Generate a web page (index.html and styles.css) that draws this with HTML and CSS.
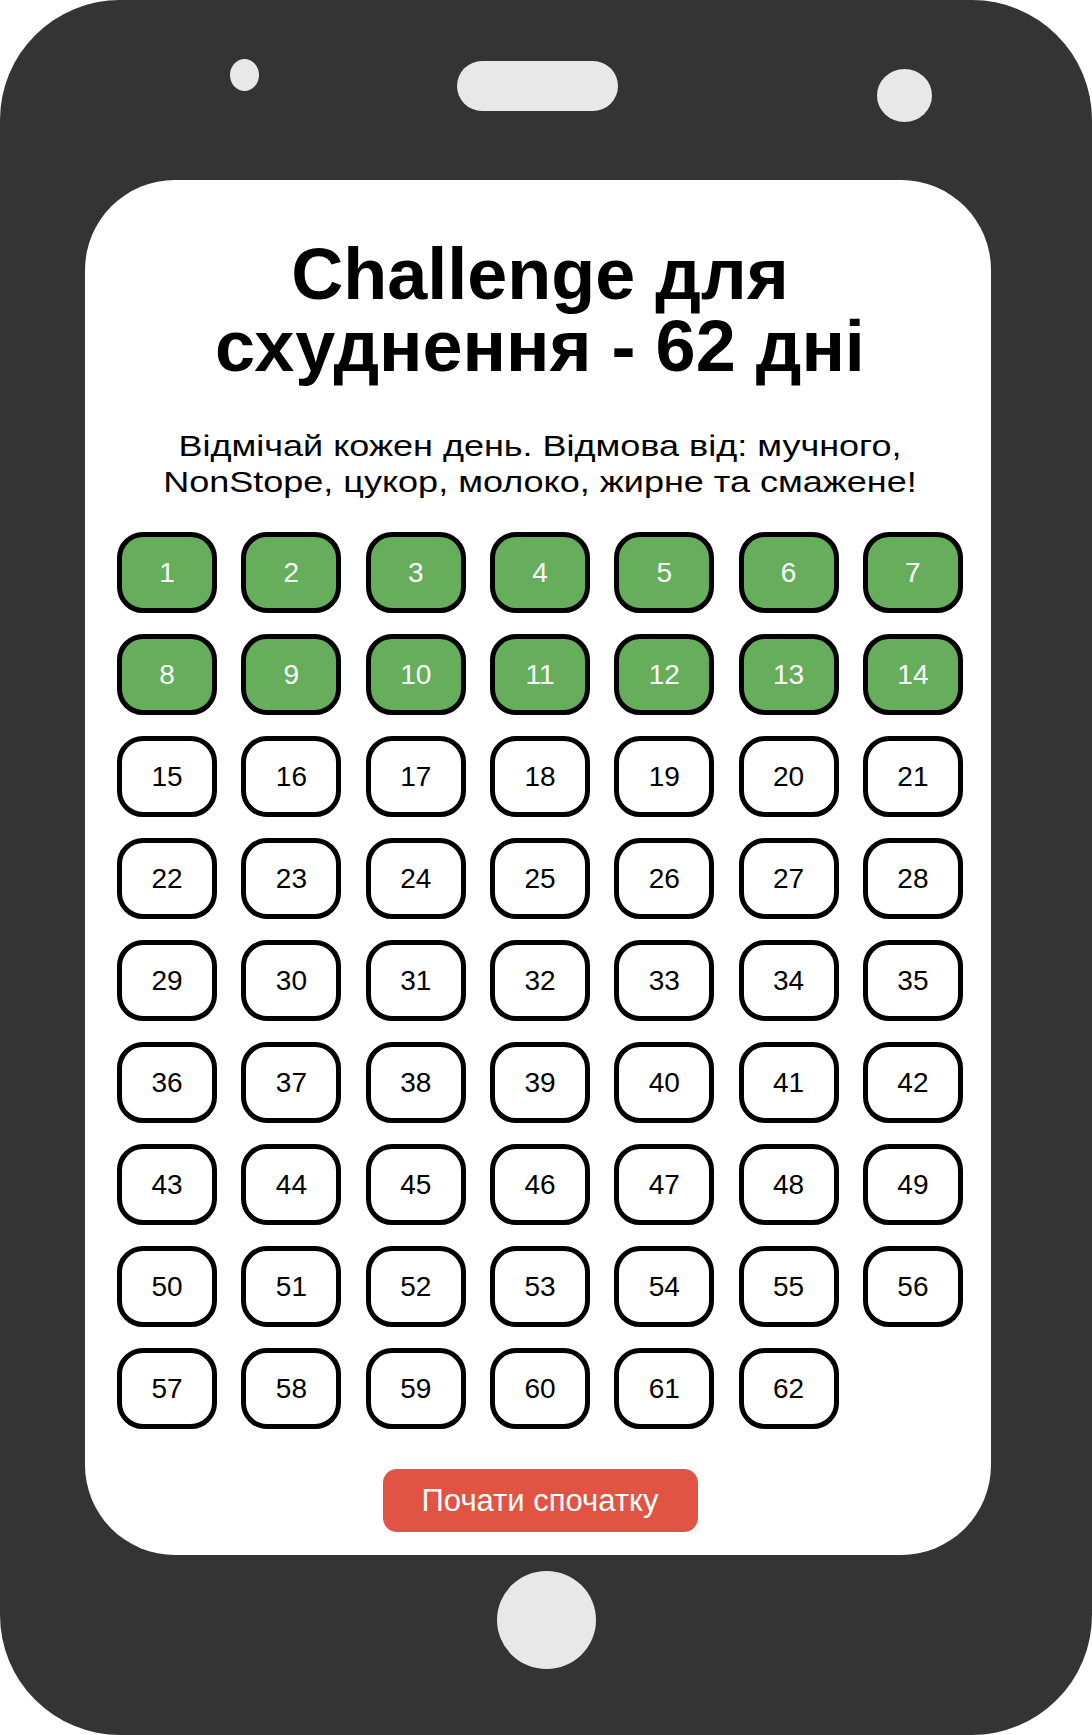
FILE: index.html
```html
<!DOCTYPE html>
<html lang="uk">
<head>
<meta charset="utf-8">
<title>Challenge для схуднення - 62 дні</title>
<link rel="stylesheet" href="styles.css">
</head>
<body>
<div class="phone">
  <div class="top">
    <span class="cam-small"></span>
    <span class="speaker"></span>
    <span class="cam"></span>
  </div>
  <main class="screen">
    <h1 class="title">Challenge для<br>схуднення - 62 дні</h1>
    <p class="lead">Відмічай кожен день. Відмова від: мучного,<br>NonStope, цукор, молоко, жирне та смажене!</p>
    <div class="grid">
      <div class="day done">1</div><div class="day done">2</div><div class="day done">3</div><div class="day done">4</div><div class="day done">5</div><div class="day done">6</div><div class="day done">7</div>
      <div class="day done">8</div><div class="day done">9</div><div class="day done">10</div><div class="day done">11</div><div class="day done">12</div><div class="day done">13</div><div class="day done">14</div>
      <div class="day">15</div><div class="day">16</div><div class="day">17</div><div class="day">18</div><div class="day">19</div><div class="day">20</div><div class="day">21</div>
      <div class="day">22</div><div class="day">23</div><div class="day">24</div><div class="day">25</div><div class="day">26</div><div class="day">27</div><div class="day">28</div>
      <div class="day">29</div><div class="day">30</div><div class="day">31</div><div class="day">32</div><div class="day">33</div><div class="day">34</div><div class="day">35</div>
      <div class="day">36</div><div class="day">37</div><div class="day">38</div><div class="day">39</div><div class="day">40</div><div class="day">41</div><div class="day">42</div>
      <div class="day">43</div><div class="day">44</div><div class="day">45</div><div class="day">46</div><div class="day">47</div><div class="day">48</div><div class="day">49</div>
      <div class="day">50</div><div class="day">51</div><div class="day">52</div><div class="day">53</div><div class="day">54</div><div class="day">55</div><div class="day">56</div>
      <div class="day">57</div><div class="day">58</div><div class="day">59</div><div class="day">60</div><div class="day">61</div><div class="day">62</div>
    </div>
    <button class="reset">Почати спочатку</button>
  </main>
  <div class="bottom"><span class="home"></span></div>
</div>
</body>
</html>
```
FILE: styles.css
```css
html, body {
  margin: 0;
  padding: 0;
  background: #ffffff;
}

body {
  font-family: "Liberation Sans", Arial, sans-serif;
}

.phone {
  width: 1092px;
  height: 1735px;
  background: #343434;
  border-radius: 120px;
  display: flex;
  flex-direction: column;
}

.top {
  height: 180px;
  flex: none;
  display: flex;
  align-items: flex-start;
}

.cam-small {
  width: 29px;
  height: 32px;
  margin: 59px 0 0 230px;
  border-radius: 50%;
  background: #e8e8e8;
}

.speaker {
  width: 161px;
  height: 50px;
  margin: 61px 0 0 198px;
  border-radius: 25px;
  background: #e8e8e8;
}

.cam {
  width: 55px;
  height: 53px;
  margin: 69px 0 0 259px;
  border-radius: 50%;
  background: #e8e8e8;
}

.screen {
  flex: none;
  box-sizing: border-box;
  width: 906px;
  height: 1375px;
  margin-left: 85px;
  padding: 58px 0 0 4px;
  background: #ffffff;
  border-radius: 90px;
  display: flex;
  flex-direction: column;
  align-items: center;
}

.title {
  margin: 0;
  font-size: 72px;
  line-height: 72px;
  font-weight: bold;
  text-align: center;
  color: #000;
}

.lead {
  margin: 46px 0 0;
  font-size: 30px;
  line-height: 36px;
  text-align: center;
  white-space: nowrap;
  color: #000;
  transform: scaleX(1.2);
}

.grid {
  margin-top: 32px;
  display: grid;
  grid-template-columns: repeat(7, 100px);
  grid-auto-rows: 81px;
  column-gap: 24.3px;
  row-gap: 21px;
}

.day {
  box-sizing: border-box;
  border: 5px solid #000;
  border-radius: 26px;
  background: #fff;
  color: #000;
  font-size: 28px;
  display: flex;
  align-items: center;
  justify-content: center;
}

.day.done {
  background: #66ad5c;
  color: #fff;
}

.reset {
  margin-top: 40px;
  width: 315px;
  height: 63px;
  border: none;
  border-radius: 14px;
  background: #e15444;
  color: #fff;
  font-family: "Liberation Sans", Arial, sans-serif;
  font-size: 31px;
  padding: 0;
}

.bottom {
  flex: 1;
  display: flex;
  align-items: flex-start;
}

.home {
  width: 99px;
  height: 98px;
  margin: 16px 0 0 497px;
  border-radius: 50%;
  background: #e8e8e8;
}
```
